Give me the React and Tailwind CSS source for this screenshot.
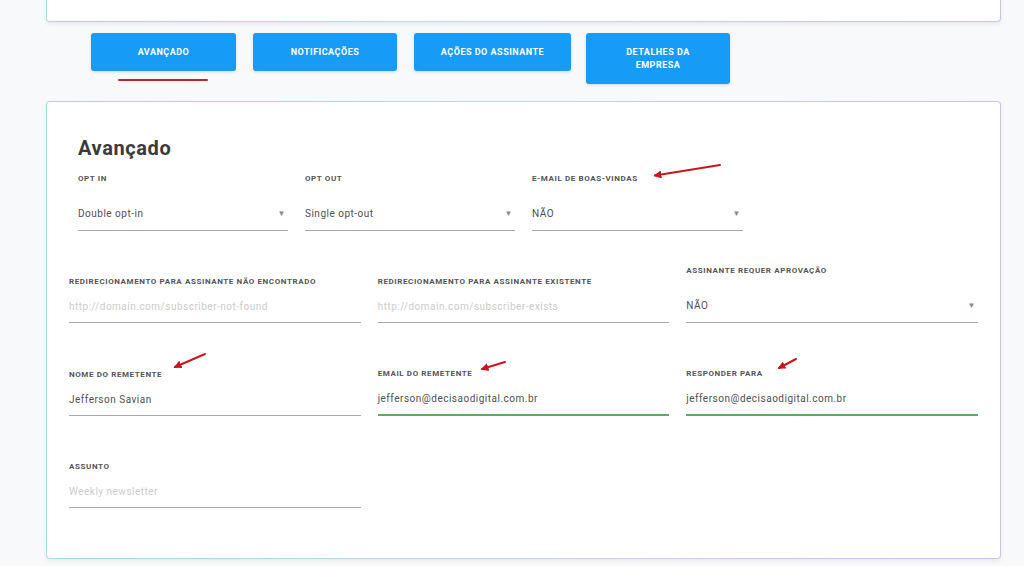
import React from 'react';

const tabs = [
  { label: 'Avançado', w: 'w-[145px]', h: 'h-[38px]' },
  { label: 'Notificações', w: 'w-[144px]', h: 'h-[38px]' },
  { label: 'Ações do assinante', w: 'w-[157px]', h: 'h-[38px]' },
  { label: 'Detalhes da empresa', w: 'w-[144px]', h: 'h-[51px]', wrap: true },
];

function Label({ children }) {
  return (
    <div className="h-[10px] text-[8px] leading-[10px] font-bold uppercase tracking-[0.6px] text-[#555] whitespace-nowrap">
      {children}
    </div>
  );
}

// text input with underline
function TextField({ label, value, placeholder, active }) {
  return (
    <div className="flex flex-col">
      <Label>{label}</Label>
      <div
        className={`mt-[14px] pb-[9px] text-[10px] leading-[12px] tracking-[0.5px] whitespace-nowrap ${
          active ? 'border-b-2 border-[#5cae5c]' : 'border-b border-[#a9a9a9]'
        } ${value ? 'text-[#505050]' : 'text-[#cbcbcb]'}`}
      >
        {value || placeholder}
      </div>
    </div>
  );
}

// select with small caret
function SelectField({ label, value }) {
  return (
    <div className="flex flex-col">
      <Label>{label}</Label>
      <div className="mt-[24px] pb-[10px] border-b border-[#a9a9a9] flex items-center justify-between text-[10px] leading-[12px] tracking-[0.5px] text-[#505050]">
        <span>{value}</span>
        <span className="text-[8px] text-[#8a8a8a] pr-[2px]">▼</span>
      </div>
    </div>
  );
}

function GradientCard({ className = '', innerClassName = '', children }) {
  return (
    <div className={`rounded-[4px] bg-linear-to-r from-[#a3dbe8] via-[#c5d4ee] to-[#d3bdea] p-px shadow-[0_2px_4px_rgba(0,0,0,0.07)] ${className}`}>
      <div className={`rounded-[3px] bg-white h-full ${innerClassName}`}>{children}</div>
    </div>
  );
}

export default function App() {
  return (
    <div className="relative h-[566px] overflow-hidden bg-[#f8f9fb] font-['Roboto',sans-serif]">
      <div className="ml-[46px] w-[955px]">
        {/* previous section, cut off */}
        <GradientCard className="h-[40px] -mt-[18px]" />

        {/* tab buttons */}
        <div className="mt-[11px] pl-[45px] flex items-start gap-[17px]">
          {tabs.map((t, i) => (
            <div key={t.label} className={`relative ${t.wrap ? '-ml-[2px]' : ''}`}>
              <button
                className={`${t.w} ${t.h} rounded-[3px] bg-[#169bf6] shadow-[0_1px_3px_rgba(0,0,0,0.15)] text-white text-[9px] leading-[13px] font-bold uppercase tracking-[0.5px] flex items-center justify-center text-center ${
                  t.wrap ? 'px-[30px]' : 'px-[6px] whitespace-nowrap'
                }`}
              >
                {t.label}
              </button>
              {i === 0 && <div className="absolute left-[27px] top-[46px] w-[90px] h-[2px] rounded-full bg-[#c4252b]" />}
            </div>
          ))}
        </div>

        {/* Avançado */}
        <GradientCard className="mt-[17px]" innerClassName="pt-[34px] pb-[50px]">
          <h2 className="pl-[31px] text-[20px] leading-[24px] font-bold tracking-[0.6px] text-[#3b3b3b]">Avançado</h2>

          <div className="mt-[14px] pl-[31px] flex gap-[17px]">
            <div className="w-[210px]">
              <SelectField label="Opt in" value="Double opt-in" />
            </div>
            <div className="w-[210px]">
              <SelectField label="Opt out" value="Single opt-out" />
            </div>
            <div className="w-[211px]">
              <SelectField label="E-mail de boas-vindas" value="NÃO" />
            </div>
          </div>

          <div className="mt-[35px] px-[22px] grid grid-cols-3 gap-x-[17px] gap-y-[46px] items-end">
            <TextField label="Redirecionamento para assinante não encontrado" placeholder="http://domain.com/subscriber-not-found" />
            <TextField label="Redirecionamento para assinante existente" placeholder="http://domain.com/subscriber-exists" />
            <SelectField label="Assinante requer aprovação" value="NÃO" />

            <TextField label="Nome do remetente" value="Jefferson Savian" />
            <TextField label="Email do remetente" value="jefferson@decisaodigital.com.br" active />
            <TextField label="Responder para" value="jefferson@decisaodigital.com.br" active />

            <TextField label="Assunto" placeholder="Weekly newsletter" />
          </div>
        </GradientCard>
      </div>

      {/* red annotation arrows */}
      <svg className="absolute inset-0 pointer-events-none" width="1024" height="566">
        <defs>
          <marker id="head" viewBox="0 0 10 10" refX="8" refY="5" markerWidth="4" markerHeight="4" orient="auto">
            <path d="M0 0 L10 5 L0 10 z" fill="#c8161d" />
          </marker>
        </defs>
        <g stroke="#c8161d" strokeWidth="2" strokeLinecap="round" fill="none" markerEnd="url(#head)">
          <line x1="720" y1="165" x2="655" y2="175.5" />
          <line x1="205" y1="354" x2="175" y2="367" />
          <line x1="505" y1="362" x2="482" y2="369" />
          <line x1="796" y1="359" x2="779" y2="368" />
        </g>
      </svg>
    </div>
  );
}
